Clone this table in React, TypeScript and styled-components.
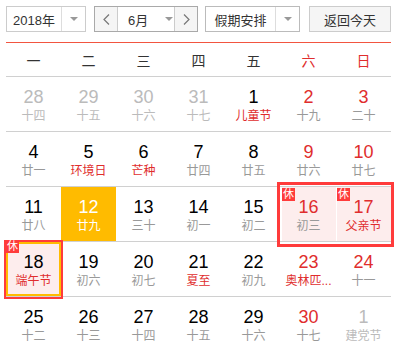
import React from "react";
import styled, { createGlobalStyle, css } from "styled-components";

const GlobalStyle = createGlobalStyle`
  html, body {
    margin: 0;
    padding: 0;
    background: #fff;
  }
  body {
    font-family: "Liberation Sans", "Noto Sans CJK SC", sans-serif;
  }
`;

const red = "#e02d2d";
const holidayRed = "#ff3b3b";

const Page = styled.div`
  width: 397px;
  height: 354px;
  padding: 6px 6px 0;
  box-sizing: border-box;
  overflow: hidden;
`;

const Toolbar = styled.div`
  display: flex;
  height: 26px;
`;

const SelectBox = styled.div<{ w: number; border: string; ml: number }>`
  display: flex;
  width: ${(p) => p.w}px;
  margin-left: ${(p) => p.ml}px;
  box-sizing: border-box;
  border: 1px solid ${(p) => p.border};
  background: #fff;
  font-size: 13px;
  color: #333;
`;

const SelectLabel = styled.div`
  flex: 1;
  display: flex;
  align-items: center;
  justify-content: center;
`;

const CaretArea = styled.div<{ divider?: string }>`
  width: 23px;
  display: flex;
  align-items: center;
  justify-content: center;
  border-left: 1px solid ${(p) => p.divider ?? "#ddd"};
`;

const Caret = styled.span`
  width: 0;
  height: 0;
  border-left: 4px solid transparent;
  border-right: 4px solid transparent;
  border-top: 4px solid #999;
`;

const ArrowButton = styled.div<{ side: "left" | "right" }>`
  width: 22px;
  display: flex;
  align-items: center;
  justify-content: center;
  background: #f5f5f5;
  ${(p) =>
    p.side === "left"
      ? css`border-right: 1px solid #ccc;`
      : css`border-left: 1px solid #ccc;`}
`;

const MonthLabel = styled.div`
  flex: 1;
  display: flex;
  align-items: center;
  padding-left: 10px;
  gap: 17px;
`;

const TodayButton = styled.div`
  width: 82px;
  margin-left: 9px;
  box-sizing: border-box;
  border: 1px solid #ccc;
  background: #f5f5f5;
  display: flex;
  align-items: center;
  justify-content: center;
  font-size: 13px;
  color: #333;
`;

const Grid = styled.div`
  display: grid;
  grid-template-columns: repeat(7, 55px);
  grid-template-rows: 34px repeat(5, 55px);
  margin-top: 10px;
  border-top: 1px solid #f25540;
`;

const WeekHead = styled.div<{ weekend?: boolean }>`
  display: flex;
  align-items: center;
  justify-content: center;
  font-size: 14px;
  color: ${(p) => (p.weekend ? red : "#333")};
  border-bottom: 1px solid #d0d0d0;
`;

type Kind = "normal" | "other" | "today" | "holiday" | "selected";

const Cell = styled.div<{ kind: Kind; last?: boolean; row: number; col: number }>`
  grid-row: ${(p) => p.row};
  grid-column: ${(p) => p.col};
  position: relative;
  display: flex;
  flex-direction: column;
  align-items: center;
  padding-top: 10px;
  box-sizing: border-box;
  border-bottom: 1px solid ${(p) => (p.last ? "transparent" : "#d0d0d0")};
  ${(p) =>
    p.kind === "today" &&
    css`
      background: #ffbb00;
    `}
  ${(p) =>
    p.kind === "holiday" &&
    css`
      background: #fdeded;
      box-shadow: inset 1px 0 0 #fff;
    `}
  ${(p) =>
    p.kind === "selected" &&
    css`
      background: #fdeded;
      box-shadow: 0 0 0 2px ${holidayRed}, inset 0 0 0 2px #ffbb00;
      z-index: 2;
    `}
`;

const DayNum = styled.div<{ color: string }>`
  font-size: 18px;
  line-height: 20px;
  color: ${(p) => p.color};
`;

const Lunar = styled.div<{ color: string }>`
  font-size: 12px;
  line-height: 18px;
  color: ${(p) => p.color};
  white-space: nowrap;
`;

const RestBadge = styled.span<{ shift?: boolean }>`
  position: absolute;
  top: ${(p) => (p.shift ? "-2px" : "1px")};
  left: ${(p) => (p.shift ? "0" : "1px")};
  width: 13px;
  height: 13px;
  background: ${holidayRed};
  color: #fff;
  font-size: 11px;
  line-height: 13px;
  text-align: center;
  z-index: 3;
`;

const RangeFrame = styled.div<{ col: number; span: number; row: number }>`
  grid-column: ${(p) => p.col} / span ${(p) => p.span};
  grid-row: ${(p) => p.row};
  margin: -5px -3px -5px -4px;
  border: 3px solid ${holidayRed};
  pointer-events: none;
  z-index: 2;
`;

const Chevron = ({ dir }: { dir: "left" | "right" }) => (
  <svg width="7" height="11" viewBox="0 0 7 11">
    <polyline
      points={dir === "left" ? "6,0.5 1,5.5 6,10.5" : "1,0.5 6,5.5 1,10.5"}
      fill="none"
      stroke="#777"
      strokeWidth="1.2"
    />
  </svg>
);

type Day = {
  n: number;
  lunar: string;
  kind?: Kind;
  redNum?: boolean;
  redLunar?: boolean;
  rest?: boolean;
};

const weeks: Day[][] = [
  [
    { n: 28, lunar: "十四", kind: "other" },
    { n: 29, lunar: "十五", kind: "other" },
    { n: 30, lunar: "十六", kind: "other" },
    { n: 31, lunar: "十七", kind: "other" },
    { n: 1, lunar: "儿童节", redLunar: true },
    { n: 2, lunar: "十九", redNum: true },
    { n: 3, lunar: "二十", redNum: true },
  ],
  [
    { n: 4, lunar: "廿一" },
    { n: 5, lunar: "环境日", redLunar: true },
    { n: 6, lunar: "芒种", redLunar: true },
    { n: 7, lunar: "廿四" },
    { n: 8, lunar: "廿五" },
    { n: 9, lunar: "廿六", redNum: true },
    { n: 10, lunar: "廿七", redNum: true },
  ],
  [
    { n: 11, lunar: "廿八" },
    { n: 12, lunar: "廿九", kind: "today" },
    { n: 13, lunar: "三十" },
    { n: 14, lunar: "初一" },
    { n: 15, lunar: "初二" },
    { n: 16, lunar: "初三", kind: "holiday", redNum: true, rest: true },
    { n: 17, lunar: "父亲节", kind: "holiday", redNum: true, redLunar: true, rest: true },
  ],
  [
    { n: 18, lunar: "端午节", kind: "selected", redLunar: true, rest: true },
    { n: 19, lunar: "初六" },
    { n: 20, lunar: "初七" },
    { n: 21, lunar: "夏至", redLunar: true },
    { n: 22, lunar: "初九" },
    { n: 23, lunar: "奥林匹...", redNum: true, redLunar: true },
    { n: 24, lunar: "十一", redNum: true },
  ],
  [
    { n: 25, lunar: "十二" },
    { n: 26, lunar: "十三" },
    { n: 27, lunar: "十四" },
    { n: 28, lunar: "十五" },
    { n: 29, lunar: "十六" },
    { n: 30, lunar: "十七", redNum: true },
    { n: 1, lunar: "建党节", kind: "other" },
  ],
];

const heads = ["一", "二", "三", "四", "五", "六", "日"];

const DayCell = ({ d, row, col, last }: { d: Day; row: number; col: number; last: boolean }) => {
  const kind = d.kind ?? "normal";
  let numColor = d.redNum ? red : "#000";
  let lunarColor = d.redLunar ? red : "#999";
  if (kind === "other") {
    numColor = "#bbb";
    lunarColor = "#bbb";
  }
  if (kind === "today") {
    numColor = "#fff";
    lunarColor = "#fff";
  }
  return (
    <Cell kind={kind} last={last} row={row} col={col}>
      {d.rest && <RestBadge shift={kind === "selected"}>休</RestBadge>}
      <DayNum color={numColor}>{d.n}</DayNum>
      <Lunar color={lunarColor}>{d.lunar}</Lunar>
    </Cell>
  );
};

export default function App() {
  return (
    <Page>
      <GlobalStyle />
      <Toolbar>
        <SelectBox w={80} border="#ccc" ml={0}>
          <SelectLabel>2018年</SelectLabel>
          <CaretArea>
            <Caret />
          </CaretArea>
        </SelectBox>
        <SelectBox w={104} border="#a9a9a9" ml={8}>
          <ArrowButton side="left">
            <Chevron dir="left" />
          </ArrowButton>
          <MonthLabel>
            <span>6月</span>
            <Caret />
          </MonthLabel>
          <ArrowButton side="right">
            <Chevron dir="right" />
          </ArrowButton>
        </SelectBox>
        <SelectBox w={95} border="#bbb" ml={7}>
          <SelectLabel>假期安排</SelectLabel>
          <CaretArea>
            <Caret />
          </CaretArea>
        </SelectBox>
        <TodayButton>返回今天</TodayButton>
      </Toolbar>
      <Grid>
        {heads.map((h, i) => (
          <WeekHead key={h} weekend={i >= 5}>
            {h}
          </WeekHead>
        ))}
        {weeks.map((w, wi) =>
          w.map((d, di) => (
            <DayCell
              key={`${wi}-${di}`}
              d={d}
              row={wi + 2}
              col={di + 1}
              last={wi === weeks.length - 1}
            />
          ))
        )}
        <RangeFrame col={6} span={2} row={4} />
      </Grid>
    </Page>
  );
}
